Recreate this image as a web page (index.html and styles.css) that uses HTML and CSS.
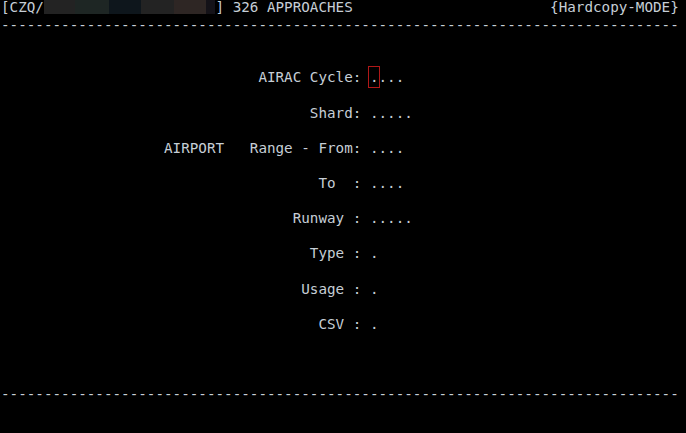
FILE: index.html
```html
<!DOCTYPE html>
<html lang="en">
<head>
  <meta charset="UTF-8" />
  <title>326 APPROACHES</title>
  <link rel="stylesheet" href="styles.css">
</head>
<body>
  <div class="screen">
<pre class="term">[CZQ/<span class="redact"></span>] 326 APPROACHES                       {Hardcopy-MODE}
-------------------------------------------------------------------------------


                              AIRAC Cycle: <span class="cursor">.</span>...

                                    Shard: .....

                   AIRPORT   Range - From: ....

                                     To  : ....

                                  Runway : .....

                                    Type : .

                                   Usage : .

                                     CSV : .



-------------------------------------------------------------------------------</pre>
  </div>
</body>
</html>
```

FILE: styles.css
```css
* { box-sizing: border-box; }
html, body {
  margin: 0;
  background: #000;
}
.screen {
  width: 686px;
  height: 433px;
  overflow: hidden;
  padding: 0 0 0 1px;
}
.term {
  margin: -1px 0 0;
  font-family: 'DejaVu Sans Mono', 'Liberation Mono', monospace;
  font-size: 14.25px;
  line-height: 17.6px;
  color: #c6ced6;
  white-space: pre;
}
.redact {
  display: inline-block;
  width: 20ch;
  height: 14px;
  vertical-align: top;
  margin-top: 1px;
  background: linear-gradient(to right,
    #232323 0, #232323 31px,
    #1e2624 31px, #1e2624 65px,
    #0e161c 65px, #0e161c 97px,
    #232323 97px, #232323 130px,
    #2e2624 130px, #2e2624 162px,
    #141218 162px);
}
.cursor {
  position: relative;
}
.cursor::before {
  content: "";
  position: absolute;
  left: -2px;
  top: -3px;
  width: 10px;
  height: 20px;
  border: 1px solid #b01818;
}
```
